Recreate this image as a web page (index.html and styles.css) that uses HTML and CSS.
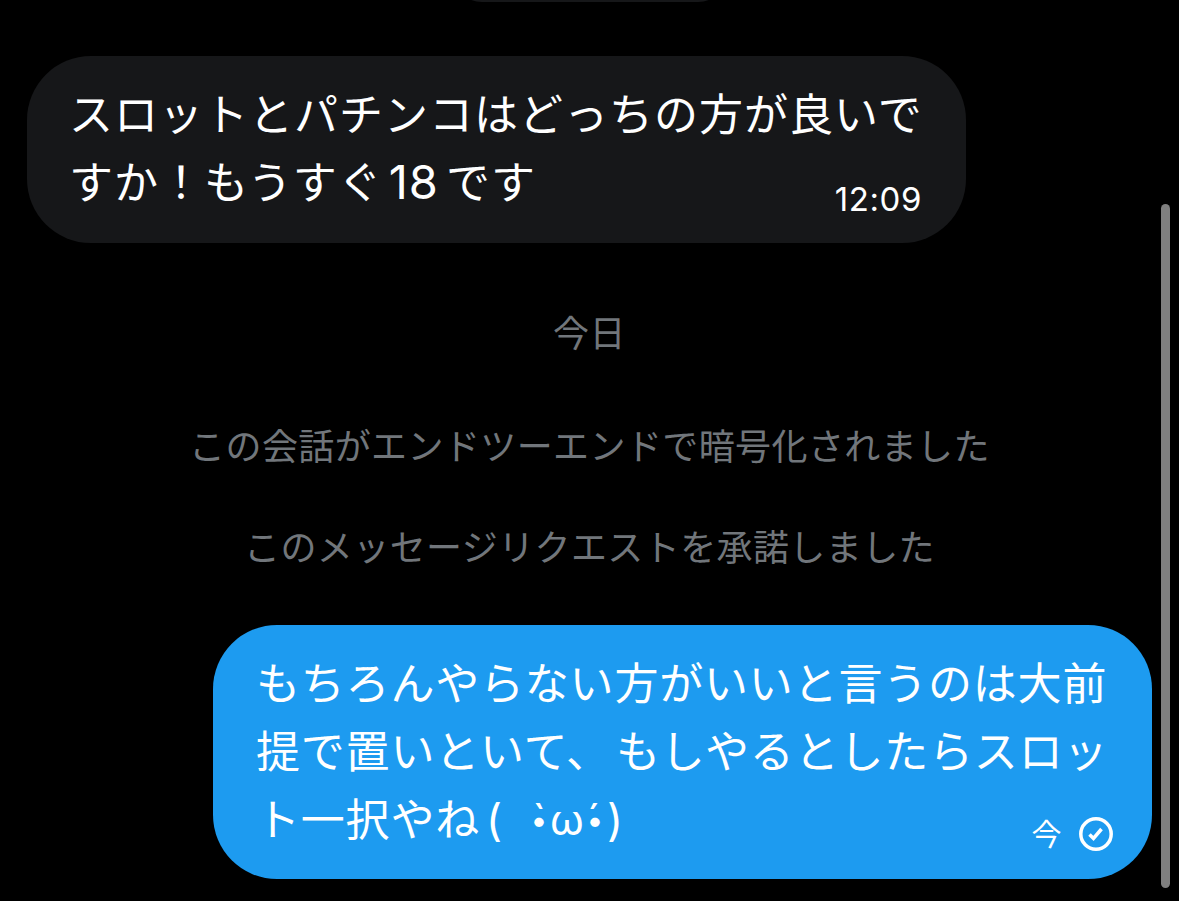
FILE: index.html
```html
<!DOCTYPE html>
<html lang="ja">
<head>
  <meta charset="UTF-8">
  <meta name="viewport" content="width=device-width, initial-scale=1.0">
  <title>メッセージ</title>
  <link rel="stylesheet" href="styles.css">
</head>
<body>
  <div id="chat">
    <div class="prev"></div>
    <div class="msg left">
      <p>スロットとパチンコはどっちの方が良いで</p>
      <p>すか！もうすぐ<span class="num">18</span>です</p>
      <div class="time">12:09</div>
    </div>
    <div class="notice day">今日</div>
    <div class="notice crypt">この会話がエンドツーエンドで暗号化されました</div>
    <div class="notice accept">このメッセージリクエストを承諾しました</div>
    <div class="msg right">
      <p>もちろんやらない方がいいと言うのは大前</p>
      <p>提で置いといて<span class="comma">、</span>もしやるとしたらスロッ</p>
      <p class="last">ト一択やね<span class="face"><span class="paren">(</span><span class="eye">•<i>ˋ</i></span><span class="mouth">ω</span><span class="eye">•<i>ˊ</i></span><span class="paren">)</span></span></p>
      <div class="time">
        <span>今</span>
        <svg class="check" viewBox="0 0 34 34">
          <circle cx="17" cy="17" r="15.2"/>
          <path d="M10.5 17.5l4 4 8-9.5"/>
        </svg>
      </div>
    </div>
    <div class="scrollbar"></div>
  </div>
</body>
</html>
```
FILE: styles.css
```css
* { margin: 0; padding: 0; box-sizing: border-box; }
body {
  background: #000;
  font-family: Inter, "Noto Sans CJK JP", sans-serif;
}
#chat {
  position: relative;
  width: 1179px;
  height: 901px;
  overflow: hidden;
  display: flex;
  flex-direction: column;
}
.prev {
  width: 276px;
  height: 60px;
  margin: -58px auto 54px;
  flex: none;
  border-radius: 30px;
  background: #161719;
}
.msg {
  position: relative;
  width: 939px;
  padding: 25px 42px;
  border-radius: 64px;
  color: #fff;
  font-size: 44px;
  letter-spacing: 1px;
  line-height: 68px;
  white-space: nowrap;
  flex: none;
}
.left {
  height: 187px;
  margin-left: 27px;
  background: #161719;
}
.right {
  height: 254px;
  padding-left: 43px;
  margin-left: 213px;
  background: #1d9bf0;
  letter-spacing: 0.8px;
}
.num {
  margin: 0 7px 0 6px;
  font-size: 47px;
  line-height: 1;
}
.comma { margin-right: 5px; }
.last {
  display: flex;
}
.face {
  display: flex;
  margin-left: 6px;
  letter-spacing: 0;
}
.face span {
  position: relative;
  text-align: center;
}
.paren { width: 16px; }
.paren:first-child { margin-right: 27px; }
.paren:last-child { margin-left: 2px; }
.eye {
  width: 20px;
  font-size: 30px;
}
.eye i {
  position: absolute;
  left: -1px;
  top: 0;
  width: 20px;
  font-size: 42px;
  font-style: normal;
}
.mouth {
  width: 36px;
  font-size: 42px;
}
.time {
  position: absolute;
  right: 44px;
  bottom: 22px;
  display: flex;
  align-items: center;
  gap: 17px;
  font-size: 33px;
  line-height: 44px;
  letter-spacing: 0.6px;
}
.right .time {
  right: 39px;
  bottom: 23px;
  font-size: 30px;
}
.notice {
  height: 50px;
  line-height: 50px;
  font-size: 36px;
  letter-spacing: 0.4px;
  text-align: center;
  color: #71767b;
  flex: none;
}
.day { margin-top: 66px; }
.crypt { margin-top: 63px; }
.accept { margin: 51px 0 52px; }
.check {
  width: 34px;
  height: 34px;
  fill: none;
  stroke: #fff;
  stroke-width: 3.5;
}
.scrollbar {
  position: absolute;
  top: 204px;
  right: 9px;
  width: 9px;
  height: 684px;
  border-radius: 5px;
  background: #7f7f7f;
}
```
